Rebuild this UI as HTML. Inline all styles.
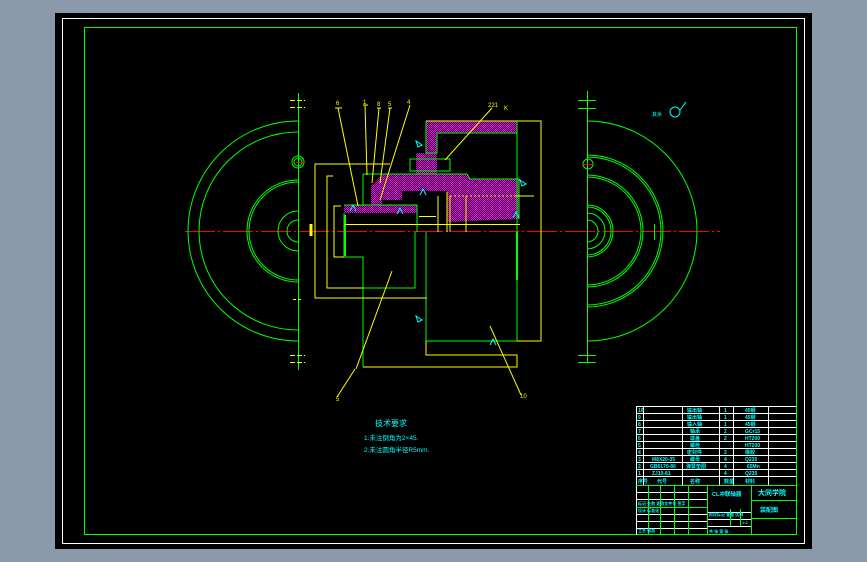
<!DOCTYPE html>
<html><head><meta charset="utf-8"><style>
html,body{margin:0;padding:0;background:#8a9aab;width:867px;height:562px;overflow:hidden}
svg{display:block}
text{font-family:"Liberation Sans","Noto Sans CJK SC",sans-serif}
</style></head><body>
<svg width="867" height="562" viewBox="0 0 867 562" xmlns="http://www.w3.org/2000/svg">
<defs>
<pattern id="hx" width="2" height="2" patternUnits="userSpaceOnUse">
<rect width="2" height="2" fill="#000"/>
<rect width="1" height="1" fill="#ff00ff"/>
<rect x="1" y="1" width="1" height="1" fill="#ff00ff"/>
</pattern>
</defs>
<rect x="0" y="0" width="867" height="562" fill="#8a9aab"/>
<rect x="55" y="13" width="757" height="536" fill="#000"/>
<rect x="62.5" y="18.5" width="742" height="525" fill="none" stroke="#fff" stroke-width="1"/>
<rect x="84.5" y="27.5" width="712" height="507" fill="none" stroke="#00ff00" stroke-width="1"/>

<line x1="185" y1="231.5" x2="720" y2="231.5" stroke="#ff0000" stroke-dasharray="30 3 2 3"/>

<g fill="none" stroke="#00ff00" stroke-width="1">
<line x1="298.5" y1="93" x2="298.5" y2="370"/>
<path d="M298 121 A110 110 0 0 0 298 341"/>
<path d="M298 132 A99 99 0 0 0 298 330"/>
<path d="M298 180 A51 51 0 0 0 298 282"/>
<path d="M298 182 A49 49 0 0 0 298 280"/>
<path d="M298 211 A20 20 0 0 0 298 251"/>
<path d="M298 220 A11 11 0 0 0 298 242"/>
<circle cx="298" cy="162" r="4"/>
<circle cx="298" cy="162" r="6"/>
</g>
<line x1="296" y1="162.5" x2="305" y2="162.5" stroke="#f00"/>
<g stroke="#ffff00">
<line x1="290" y1="100.5" x2="305" y2="100.5" stroke-dasharray="5 2"/>
<line x1="290" y1="107.5" x2="305" y2="107.5" stroke-dasharray="5 2"/>
<line x1="293" y1="299.5" x2="303" y2="299.5" stroke-dasharray="3 2"/>
<line x1="290" y1="355.5" x2="305" y2="355.5" stroke-dasharray="5 2"/>
<line x1="290" y1="362.5" x2="305" y2="362.5" stroke-dasharray="5 2"/>
</g>

<g fill="none" stroke="#00ff00" stroke-width="1">
<line x1="587.5" y1="91" x2="587.5" y2="363"/>
<line x1="578" y1="100.5" x2="596" y2="100.5"/>
<line x1="578" y1="108.5" x2="596" y2="108.5"/>
<line x1="578" y1="355.5" x2="596" y2="355.5"/>
<line x1="578" y1="362.5" x2="596" y2="362.5"/>
<path d="M587 121 A110 110 0 0 1 587 341"/>
<path d="M587 155 A76 76 0 0 1 587 307"/>
<path d="M587 157 A74 74 0 0 1 587 305"/>
<path d="M587 175 A56 56 0 0 1 587 287"/>
<path d="M587 177 A54 54 0 0 1 587 285"/>
<path d="M587 205 A26 26 0 0 1 587 257"/>
<path d="M587 207 A24 24 0 0 1 587 255"/>
<path d="M587 213 A18 18 0 0 1 587 249"/>
<path d="M587 220 A11 11 0 0 1 587 242"/>
<circle cx="588" cy="164" r="5"/>
<line x1="654.5" y1="224" x2="654.5" y2="240"/>
</g>
<line x1="582" y1="164.5" x2="593" y2="164.5" stroke="#f00"/>
<text x="652" y="116" font-size="5" fill="#00ffff">其余</text>
<path d="M670 112 a5 5 0 1 0 10 0 a5 5 0 1 0 -10 0 M680 110 L686 102" fill="none" stroke="#00ffff"/>

<g fill="url(#hx)">
<polygon points="426,121 517,121 517,133 437,133 437,153 426,153"/>
<polygon points="416,153 437,153 437,174 416,174"/>
<polygon points="383,174 467,174 470,179 519,179 519,219 447,222 447,191 402,191 402,200 380,200 380,205 371,205 371,186"/>
<polygon points="344,205 417,205 417,213 344,213"/>
<polygon points="374,190 382,190 382,205 374,205"/>
</g>
<g fill="none" stroke="#00ff00" stroke-width="1">
<polyline points="426,121 517,121 517,341 426,341 426,232"/>
<polyline points="437,133 517,133"/>
<polyline points="437,133 437,153 426,153 426,121"/>
<rect x="410" y="159" width="40" height="12"/>
<line x1="363" y1="174" x2="467" y2="174"/>
<polyline points="467,174 470,179 519,179 519,219"/>
<polyline points="363,174 363,206"/>
<polyline points="344,213 344,257 363,257 363,367"/>
<polyline points="363,288 415,288 415,232"/>
<polyline points="344,205 417,205 417,232"/>
<line x1="517" y1="232" x2="517" y2="280" stroke-width="2"/>
<line x1="345" y1="215" x2="345" y2="256" stroke-width="2"/>
</g>
<g fill="none" stroke="#ffff00" stroke-width="1">
<polyline points="390,164 315,164 315,298 427,298"/>
<polyline points="333,176 327,176 327,288 363,288"/>
<polyline points="341,206 334,206 334,257 344,257"/>
<polyline points="426,121 541,121 541,341 517,341"/>
<polyline points="426,341 426,355 517,355 517,367 363,367"/>
<line x1="344" y1="224.5" x2="520" y2="224.5"/>
<line x1="419" y1="216.5" x2="436" y2="216.5"/>
<line x1="438" y1="196" x2="438" y2="232"/>
<line x1="447" y1="192" x2="447" y2="232"/>
<line x1="450" y1="196" x2="450" y2="232"/>
<line x1="466" y1="196" x2="466" y2="232"/>
<line x1="516" y1="196" x2="534" y2="196"/>
<line x1="450" y1="196" x2="516" y2="196" stroke-dasharray="2 2"/>
<line x1="338" y1="108" x2="358" y2="206"/>
<line x1="365" y1="105" x2="367" y2="175"/>
<line x1="379" y1="108" x2="372" y2="183"/>
<line x1="390" y1="108" x2="380" y2="183"/>
<line x1="410" y1="105" x2="380" y2="200"/>
<line x1="492" y1="108" x2="445" y2="160"/>
<line x1="392" y1="271" x2="356" y2="369"/>
<line x1="355" y1="369" x2="337" y2="397"/>
<line x1="490" y1="326" x2="521" y2="395"/>
<line x1="335" y1="108" x2="342" y2="108"/>
<line x1="363" y1="105" x2="368" y2="105"/>
<line x1="377" y1="108" x2="381" y2="108"/>
<line x1="388" y1="108" x2="392" y2="108"/>
</g>
<g fill="#ffff00" font-size="6">
<text x="336" y="105">6</text><text x="363" y="104">1</text><text x="377" y="106">8</text><text x="388" y="106">5</text><text x="407" y="104">4</text>
<text x="488" y="107">221</text><text x="504" y="110">K</text>
<text x="336" y="401">5</text><text x="520" y="398">10</text>
</g>
<line x1="311" y1="224" x2="311" y2="236" stroke="#ff0" stroke-width="3"/>
<g fill="none" stroke="#00ffff">
<path d="M416 141 l6 4 l-4 2 z"/><path d="M350 211 l3 -6 l3 6"/><path d="M420 195 l3 -6 l3 6"/><path d="M397 214 l3 -6 l3 6"/>
<path d="M416 316 l6 4 l-4 2 z"/><path d="M490 345 l3 -6 l3 6"/><path d="M520 180 l6 4 l-4 2z"/><path d="M513 218 l3 -6 l3 6"/>
</g>

<g fill="#00ffff">
<text x="375" y="426" font-size="8">技术要求</text>
<text x="364" y="440" font-size="6.5">1.未注倒角为2×45.</text>
<text x="364" y="452" font-size="6.5">2.未注圆角半径R5mm.</text>
</g>

<g fill="none" stroke="#fff" stroke-width="1">
<line x1="636.5" y1="406" x2="636.5" y2="535"/>
<line x1="636" y1="406.5" x2="796" y2="406.5"/>
<line x1="643.5" y1="406" x2="643.5" y2="485"/>
<line x1="682.5" y1="406" x2="682.5" y2="485"/>
<line x1="719.5" y1="406" x2="719.5" y2="485"/>
<line x1="733.5" y1="406" x2="733.5" y2="485"/>
<line x1="768.5" y1="406" x2="768.5" y2="485"/>
<line x1="636" y1="413.5" x2="796" y2="413.5"/><line x1="636" y1="420.5" x2="796" y2="420.5"/>
<line x1="636" y1="427.5" x2="796" y2="427.5"/><line x1="636" y1="434.5" x2="796" y2="434.5"/>
<line x1="636" y1="441.5" x2="796" y2="441.5"/><line x1="636" y1="448.5" x2="796" y2="448.5"/>
<line x1="636" y1="455.5" x2="796" y2="455.5"/><line x1="636" y1="462.5" x2="796" y2="462.5"/>
<line x1="636" y1="469.5" x2="796" y2="469.5"/><line x1="636" y1="476.5" x2="796" y2="476.5"/>
<line x1="636" y1="492.5" x2="707" y2="492.5"/><line x1="636" y1="499.5" x2="707" y2="499.5"/>
<line x1="636" y1="514.5" x2="707" y2="514.5"/><line x1="636" y1="521.5" x2="707" y2="521.5"/>
<line x1="636" y1="528.5" x2="707" y2="528.5"/>
<line x1="707" y1="512.5" x2="751" y2="512.5"/><line x1="707" y1="519.5" x2="751" y2="519.5"/><line x1="707" y1="526.5" x2="751" y2="526.5"/>
</g>
<g fill="none" stroke="#00ff00" stroke-width="1">
<line x1="636" y1="485.5" x2="796" y2="485.5"/>
<line x1="636" y1="507.5" x2="707" y2="507.5"/>
<line x1="707.5" y1="485" x2="707.5" y2="535"/>
<line x1="751.5" y1="485" x2="751.5" y2="535"/>
<line x1="751" y1="500.5" x2="796" y2="500.5"/>
<line x1="751" y1="518.5" x2="796" y2="518.5"/>
<line x1="648.5" y1="485" x2="648.5" y2="535"/>
<line x1="660.5" y1="485" x2="660.5" y2="535"/>
<line x1="674.5" y1="485" x2="674.5" y2="535"/>
<line x1="688.5" y1="485" x2="688.5" y2="535"/>
<line x1="730.5" y1="509" x2="730.5" y2="526"/>
<line x1="740.5" y1="509" x2="740.5" y2="526"/>
</g>
<g fill="#00ffff" font-size="5" font-weight="bold">
<text x="638" y="412">10</text><text x="687" y="412">输出轴</text><text x="724" y="412">1</text><text x="745" y="412">45钢</text>
<text x="638" y="419">9</text><text x="687" y="419">输出轴</text><text x="724" y="419">1</text><text x="745" y="419">45钢</text>
<text x="638" y="426">8</text><text x="687" y="426">输入轴</text><text x="724" y="426">1</text><text x="745" y="426">45钢</text>
<text x="638" y="433">7</text><text x="690" y="433">轴承</text><text x="724" y="433">2</text><text x="745" y="433">GCr15</text>
<text x="638" y="440">6</text><text x="690" y="440">端盖</text><text x="724" y="440">2</text><text x="745" y="440">HT200</text>
<text x="638" y="447">5</text><text x="690" y="447">螺栓</text><text x="745" y="447">HT200</text>
<text x="638" y="454">4</text><text x="687" y="454">密封件</text><text x="724" y="454">2</text><text x="745" y="454">橡胶</text>
<text x="638" y="461">3</text><text x="652" y="461">M8X20-35</text><text x="690" y="461">螺母</text><text x="724" y="461">4</text><text x="745" y="461">Q235</text>
<text x="638" y="468">2</text><text x="650" y="468">GB6170-86</text><text x="686" y="468">弹簧垫圈</text><text x="724" y="468">4</text><text x="747" y="468">65Mn</text>
<text x="638" y="475">1</text><text x="652" y="475">ZJ10-81</text><text x="724" y="475">4</text><text x="745" y="475">Q235</text>
<text x="638" y="483">序号</text><text x="657" y="483">代号</text><text x="690" y="483">名称</text><text x="724" y="483">数量</text><text x="745" y="483">材料</text>
<text x="712" y="496" font-size="5.5">CL冲联轴器</text>
<text x="758" y="495" font-size="7">大同学院</text>
<text x="760" y="512" font-size="6">装配图</text>
<text x="638" y="505" font-size="4">标记 处数 更改文件号 签字</text>
<text x="638" y="512" font-size="4">设计 标准化</text>
<text x="638" y="532" font-size="4">工艺 批准</text>
<text x="709" y="516" font-size="4">阶段标记 重量 比例</text>
<text x="742" y="524" font-size="4">1:2</text>
<text x="709" y="533" font-size="4">共 张 第 张</text>
</g>
</svg>
</body></html>
